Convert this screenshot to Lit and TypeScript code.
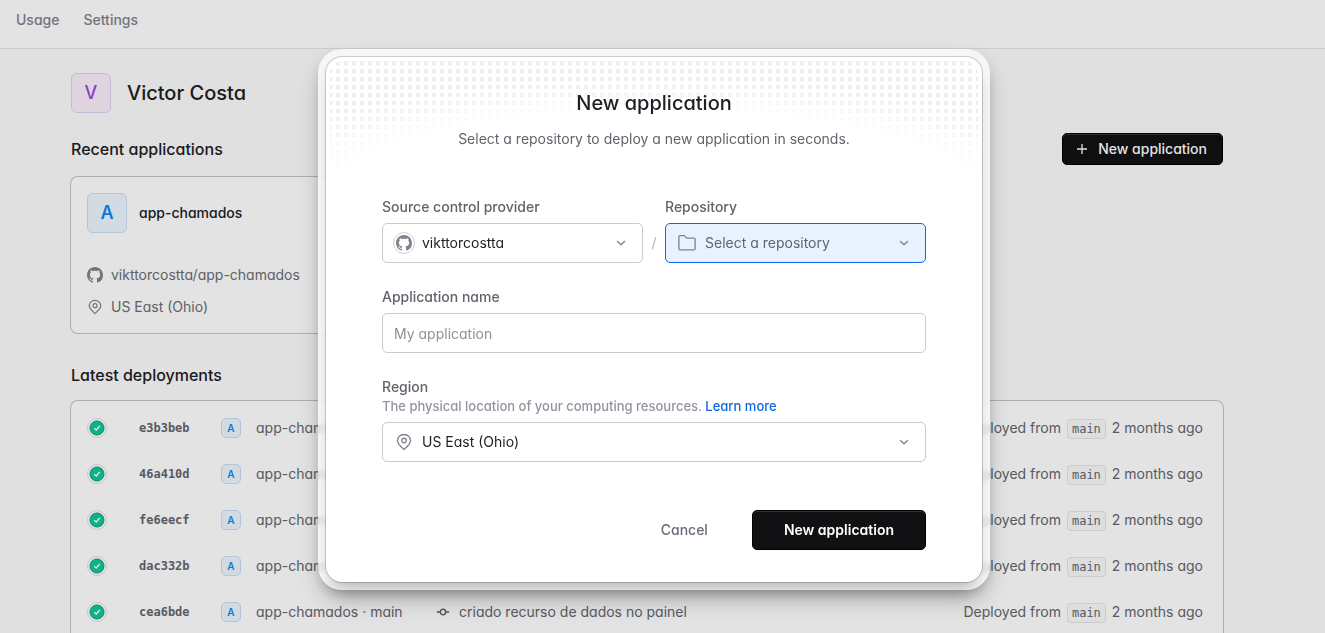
import { LitElement, html, css, svg } from "lit";
import { customElement, property } from "lit/decorators.js";

interface Deployment {
  hash: string;
  app: string;
  branch: string;
  message: string;
  when: string;
}

const deployments: Deployment[] = [
  { hash: "e3b3beb", app: "app-chamados", branch: "main", message: "", when: "2 months ago" },
  { hash: "46a410d", app: "app-chamados", branch: "main", message: "", when: "2 months ago" },
  { hash: "fe6eecf", app: "app-chamados", branch: "main", message: "", when: "2 months ago" },
  { hash: "dac332b", app: "app-chamados", branch: "main", message: "", when: "2 months ago" },
  { hash: "cea6bde", app: "app-chamados", branch: "main", message: "criado recurso de dados no painel", when: "2 months ago" },
];

const icons = {
  github: svg`<path fill="currentColor" d="M8 0C3.58 0 0 3.58 0 8c0 3.54 2.29 6.53 5.47 7.59.4.07.55-.17.55-.38 0-.19-.01-.82-.01-1.49-2.01.37-2.53-.49-2.69-.94-.09-.23-.48-.94-.82-1.13-.28-.15-.68-.52-.01-.53.63-.01 1.08.58 1.23.82.72 1.21 1.87.87 2.33.66.07-.52.28-.87.51-1.07-1.78-.2-3.64-.89-3.64-3.95 0-.87.31-1.59.82-2.15-.08-.2-.36-1.02.08-2.12 0 0 .67-.21 2.2.82.64-.18 1.32-.27 2-.27s1.36.09 2 .27c1.53-1.04 2.2-.82 2.2-.82.44 1.1.16 1.92.08 2.12.51.56.82 1.27.82 2.15 0 3.07-1.87 3.75-3.65 3.95.29.25.54.73.54 1.48 0 1.07-.01 1.93-.01 2.2 0 .21.15.46.55.38A8.01 8.01 0 0 0 16 8c0-4.42-3.58-8-8-8z"/>`,
  pin: svg`<g fill="none" stroke="currentColor" stroke-width="1.2" stroke-linejoin="round"><path d="M8 14.6C5.2 12.2 2.2 9.6 2.2 6.6a5.8 5.3 0 0 1 11.6 0c0 3-3 5.6-5.8 8z"/><circle cx="8" cy="6.7" r="2"/></g>`,
  folder: svg`<path fill="none" stroke="currentColor" stroke-width="1.2" stroke-linejoin="round" d="M.8 2.5a1 1 0 0 1 1-1h3.6a1 1 0 0 1 .8.4l1 1.3a1 1 0 0 0 .8.4h6.2a1 1 0 0 1 1 1v8.300a1.200 1.200 0 0 1-1.200 1.200H2a1.200 1.200 0 0 1-1.200-1.200z"/>`,
  chevron: svg`<path fill="none" stroke="currentColor" stroke-width="1.4" stroke-linecap="round" stroke-linejoin="round" d="M4.500 6.400 8 9.700l3.500-3.300"/>`,
  plus: svg`<path fill="none" stroke="currentColor" stroke-width="1.3" d="M8 3v10M3 8h10"/>`,
  commit: svg`<g fill="none" stroke="currentColor" stroke-width="1.5"><circle cx="8" cy="8" r="2.700"/><path d="M1.800 8h3.500M10.700 8h3.500"/></g>`,
  check: svg`<circle cx="10" cy="10" r="9.5" fill="none" stroke="#000" stroke-opacity=".13"/><circle cx="10" cy="10" r="7" fill="#0cc99c" stroke="#0b9c76" stroke-width="1"/><path fill="none" stroke="#fff" stroke-width="1.4" d="m7.200 10.200 2 1.800 3.500-4"/>`,
};

@customElement("ui-icon")
export class UiIcon extends LitElement {
  @property() name: keyof typeof icons = "plus";

  static styles = css`
    :host { display: inline-flex; width: 16px; height: 16px; flex: none; }
    svg { width: 100%; height: 100%; display: block; }
  `;

  render() {
    const box = this.name === "check" ? "0 0 20 20" : "0 0 16 16";
    return html`<svg viewBox=${box} aria-hidden="true">${icons[this.name]}</svg>`;
  }
}

@customElement("app-root")
export class AppRoot extends LitElement {
  static styles = css`
    :host {
      display: block;
      position: relative;
      height: 100vh;
      overflow: hidden;
      background: #fcfcfd;
      color: #1c2024;
      font: 400 14px/20px Inter, "Noto Sans", sans-serif;
      font-feature-settings: "cv11";
    }
    * { box-sizing: border-box; }
    h1, h2, h3, p, ul { margin: 0; padding: 0; }
    h1, h2, h3 { font-weight: 500; }
    ul { list-style: none; }
    a { color: inherit; text-decoration: none; }
    button, input, select {
      font: inherit;
      font-feature-settings: inherit;
      color: inherit;
      margin: 0;
    }

    .topbar {
      display: flex;
      gap: 24px;
      padding: 10px 16px 18px;
      background: #fff;
      border-bottom: 1px solid #e4e4e7;
      color: #80838d;
      font-weight: 500;
    }
    .page { padding: 24px 102px 0 71px; }
    .owner { display: flex; align-items: center; gap: 16px; margin-bottom: 20px; }
    .owner h1 { font-size: 20px; line-height: 28px; }
    .avatar {
      display: grid;
      place-items: center;
      width: 40px;
      height: 40px;
      border-radius: 6px;
      font-size: 18px;
      font-weight: 500;
      border: 1px solid #e2d0f2;
      background: #faf0fd;
      color: #a144d8;
    }
    .blue { border-color: #c8dcf5; background: #edf6fe; color: #0d8af0; font-weight: 600; }
    .small { width: 20px; height: 20px; border-radius: 5px; font-size: 10px; line-height: 18px; }
    .head { display: flex; align-items: center; justify-content: space-between; margin-bottom: 12px; }
    h2 { font-size: 16px; line-height: 24px; }
    .primary {
      display: inline-flex;
      align-items: center;
      justify-content: center;
      gap: 8px;
      height: 32px;
      padding: 0 15px 0 11px;
      border: 1px solid #000;
      border-radius: 5px;
      background: #111113;
      box-shadow: inset 0 1px 0 #333436;
      color: #fff;
      font-weight: 500;
    }

    .cards { display: grid; grid-template-columns: repeat(3, 1fr); gap: 24px; }
    .card, .list {
      background: #fff;
      border-radius: 7px;
      box-shadow: 0 0 0 1px #c3c3cd;
    }
    .card { padding: 16px; }
    .card-title { display: flex; align-items: center; gap: 12px; margin-bottom: 32px; }
    .card-title h3 { font-size: 14px; line-height: 20px; }
    .meta { display: grid; gap: 12px; color: #6a6d76; }
    .meta li { display: flex; align-items: center; gap: 8px; }
    .meta ui-icon { color: #80838d; }
    .latest { padding: 30px 0 14px; }

    .list { padding: 4px 0; color: #63666f; }
    .row {
      display: grid;
      grid-template-columns: 52px 82px 35px 179px 1fr auto;
      align-items: center;
      height: 46px;
      padding: 0 20px 0 16px;
    }
    .row ui-icon.status { width: 20px; height: 20px; }
    .hash { font: 700 12px/20px "DejaVu Sans Mono", monospace; }
    .message { display: flex; align-items: center; gap: 8px; }
    .source { display: flex; align-items: baseline; gap: 6px; }
    .source code {
      font: 12px/18px "DejaVu Sans Mono", monospace;
      padding: 0 4px;
      border: 1px solid #e4e4e9;
      border-radius: 4px;
      background: #fafafb;
    }

    .overlay {
      position: absolute;
      inset: 0;
      display: grid;
      place-items: center;
      padding: 6px 17px 0 0;
      background: rgba(0, 0, 0, 0.11);
    }
    .frame {
      width: 100%;
      max-width: 672px;
      padding: 8px;
      border-radius: 24px;
      background: rgba(255, 255, 255, 0.7);
      box-shadow:
        0 12px 24px -6px rgba(0, 0, 0, 0.34),
        0 4px 12px rgba(0, 0, 0, 0.08);
      backdrop-filter: blur(2px);
    }
    .dialog {
      position: relative;
      padding: 32px 56px;
      border-radius: 16px;
      background: #fff;
      box-shadow:
        0 0 0 1px rgba(0, 10, 40, 0.18),
        0 12px 16px -6px rgba(0, 0, 0, 0.28);
    }
    .dots {
      position: absolute;
      inset: 4px 4px auto;
      height: 128px;
      border-radius: 12px;
      background:
        conic-gradient(from 90deg at 6px 6px, #f1f1f3 90deg, transparent 0) 1px -5px / 8px 8px,
        conic-gradient(from 90deg at 4px 4px, #ebebed 90deg, transparent 0) 2px -4px / 8px 8px;
      -webkit-mask-image: radial-gradient(114% 141% at 50% 100%, transparent 42%, #000 62%);
      mask-image: radial-gradient(114% 141% at 50% 100%, transparent 42%, #000 62%);
    }
    .intro { position: relative; display: grid; gap: 12px; text-align: center; margin-bottom: 48px; }
    .intro h2 { font-size: 20px; line-height: 28px; }
    .intro p { color: #60646c; }
    .form { display: grid; gap: 24px; }
    .pair { display: grid; grid-template-columns: 1fr 22px 1fr; align-items: end; }
    .slash { line-height: 40px; text-align: center; color: #b0b2ba; }
    .label { display: block; color: #60646c; font-weight: 500; }
    .field { display: grid; gap: 6px; }
    .hint { font-size: 13px; line-height: 19px; font-weight: 500; color: #9295a0; }
    .hint a { color: #0b68e8; }
    .control { position: relative; display: grid; color: #80838d; }
    .box {
      width: 100%;
      height: 40px;
      padding: 0 11px;
      border: 1px solid #cacad3;
      border-radius: 5px;
      background: #fff;
      color: #1c2024;
      outline: none;
    }
    .box::placeholder { color: #8f919b; opacity: 1; }
    select.box { appearance: none; padding: 0 40px 0 39px; }
    .active .box { border-color: #1166ea; background: #e8f2ff; color: #60646c; }
    .lead, .caret { position: absolute; pointer-events: none; }
    .lead {
      left: 11px;
      top: 9px;
      width: 22px;
      height: 22px;
      display: grid;
      place-items: center;
    }
    .round { border: 1px solid #cfcfd6; border-radius: 50%; }
    .lead ui-icon { width: 18px; height: 18px; }
    .round ui-icon { width: 16px; height: 16px; }
    .caret { right: 14px; top: 12px; }
    .actions { display: flex; justify-content: flex-end; align-items: center; gap: 28px; margin-top: 24px; }
    .plain { border: 0; background: none; height: 40px; padding: 0 16px; color: #6a6d76; font-weight: 500; }
    .actions .primary { height: 40px; padding: 0 31px; font-weight: 600; }
  `;

  private row(d: Deployment) {
    return html`
      <li class="row">
        <ui-icon class="status" name="check"></ui-icon>
        <span class="hash">${d.hash}</span>
        <span class="avatar blue small">A</span>
        <span>${d.app} · ${d.branch}</span>
        <span class="message">${d.message ? html`<ui-icon name="commit"></ui-icon>${d.message}` : ""}</span>
        <span class="source"><span>Deployed from</span><code>${d.branch}</code><span>${d.when}</span></span>
      </li>
    `;
  }

  render() {
    return html`
      <nav class="topbar"><a href="#usage">Usage</a><a href="#settings">Settings</a></nav>
      <main class="page">
        <header class="owner"><span class="avatar">V</span><h1>Victor Costa</h1></header>
        <div class="head">
          <h2>Recent applications</h2>
          <button class="primary" type="button"><ui-icon name="plus"></ui-icon>New application</button>
        </div>
        <div class="cards">
          <article class="card">
            <div class="card-title"><span class="avatar blue">A</span><h3>app-chamados</h3></div>
            <ul class="meta">
              <li><ui-icon name="github"></ui-icon>vikttorcostta/app-chamados</li>
              <li><ui-icon name="pin"></ui-icon>US East (Ohio)</li>
            </ul>
          </article>
        </div>
        <h2 class="latest">Latest deployments</h2>
        <ul class="list">${deployments.map((d) => this.row(d))}</ul>
      </main>

      <div class="overlay">
        <div class="frame">
          <section class="dialog" role="dialog" aria-modal="true" aria-labelledby="title">
            <div class="dots"></div>
            <div class="intro">
              <h2 id="title">New application</h2>
              <p>Select a repository to deploy a new application in seconds.</p>
            </div>
            <form class="form">
              <div class="pair">
                <div class="field">
                  <label class="label" for="provider">Source control provider</label>
                  <div class="control">
                    <select class="box" id="provider"><option>vikttorcostta</option></select>
                    <span class="lead round"><ui-icon name="github"></ui-icon></span>
                    <ui-icon class="caret" name="chevron"></ui-icon>
                  </div>
                </div>
                <span class="slash">/</span>
                <div class="field">
                  <label class="label" for="repository">Repository</label>
                  <div class="control active">
                    <select class="box" id="repository"><option>Select a repository</option></select>
                    <span class="lead"><ui-icon name="folder"></ui-icon></span>
                    <ui-icon class="caret" name="chevron"></ui-icon>
                  </div>
                </div>
              </div>
              <div class="field">
                <label class="label" for="name">Application name</label>
                <input class="box" id="name" type="text" placeholder="My application" />
              </div>
              <div class="field">
                <div>
                  <label class="label" for="region">Region</label>
                  <p class="hint">The physical location of your computing resources. <a href="#regions">Learn more</a></p>
                </div>
                <div class="control">
                  <select class="box" id="region"><option>US East (Ohio)</option></select>
                  <span class="lead"><ui-icon name="pin"></ui-icon></span>
                  <ui-icon class="caret" name="chevron"></ui-icon>
                </div>
              </div>
              <div class="actions">
                <button class="plain" type="button">Cancel</button>
                <button class="primary" type="button">New application</button>
              </div>
            </form>
          </section>
        </div>
      </div>
    `;
  }
}
